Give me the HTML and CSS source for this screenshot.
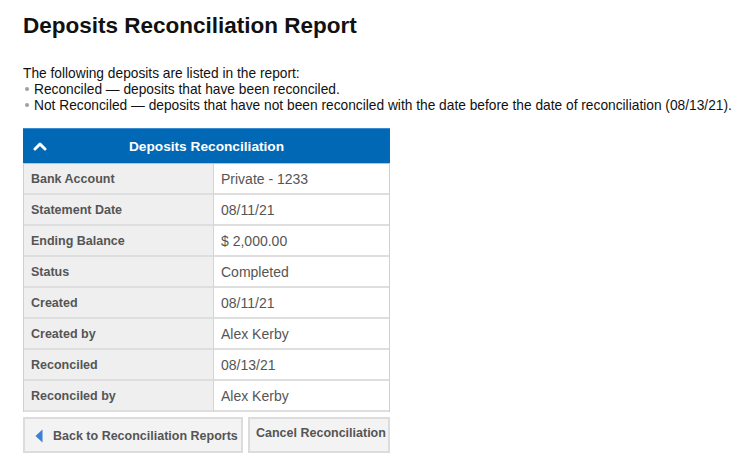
FILE: index.html
```html
<!DOCTYPE html>
<html>
<head>
<meta charset="utf-8">
<link rel="stylesheet" href="styles.css">
</head>
<body>
<div class="page">
  <h1 class="title">Deposits Reconciliation Report</h1>
  <div class="intro">
    <div>The following deposits are listed in the report:</div>
    <div><span class="dot"></span>Reconciled — deposits that have been reconciled.</div>
    <div><span class="dot"></span>Not Reconciled — deposits that have not been reconciled with the date before the date of reconciliation (08/13/21).</div>
  </div>
  <div class="panel">
    <div class="panel-head">
      <svg class="chev" width="14" height="10" viewBox="0 0 14 10"><path d="M2 8 L7 3 L12 8" fill="none" stroke="#fff" stroke-width="3" stroke-linecap="round" stroke-linejoin="round"/></svg>
      <span class="panel-title">Deposits Reconciliation</span>
    </div>
    <div class="grid">
      <div class="lbl">Bank Account</div><div class="val">Private - 1233</div>
      <div class="lbl">Statement Date</div><div class="val">08/11/21</div>
      <div class="lbl">Ending Balance</div><div class="val">$ 2,000.00</div>
      <div class="lbl">Status</div><div class="val">Completed</div>
      <div class="lbl">Created</div><div class="val">08/11/21</div>
      <div class="lbl">Created by</div><div class="val">Alex Kerby</div>
      <div class="lbl">Reconciled</div><div class="val">08/13/21</div>
      <div class="lbl">Reconciled by</div><div class="val">Alex Kerby</div>
    </div>
  </div>
  <div class="buttons">
    <button class="btn btn-back"><svg class="tri" width="8" height="14" viewBox="0 0 8 14"><path d="M7.5 0.5 L0.5 7 L7.5 13.5 Z" fill="#3d7fd4"/></svg>Back to Reconciliation Reports</button>
    <button class="btn btn-cancel">Cancel Reconciliation</button>
  </div>
</div>
</body>
</html>
```
FILE: styles.css
```css
html, body {
  margin: 0;
  padding: 0;
  background: #fff;
}
body {
  font-family: "Liberation Sans", Arial, sans-serif;
  color: #111;
}
.page {
  padding: 13px 0 0 23px;
}
.title {
  font-size: 22.5px;
  font-weight: bold;
  line-height: 26px;
  margin: 0;
  color: #111;
}
.intro {
  margin-top: 27px;
  font-size: 13.75px;
  line-height: 16px;
  color: #111;
}
.dot {
  display: inline-block;
  width: 4px;
  height: 4px;
  border-radius: 50%;
  background: #a0a0a0;
  margin: 0 5px 2px 2px;
  vertical-align: middle;
}
.panel {
  margin-top: 14px;
  width: 367px;
  border-left: 1px solid #d0d0d0;
  border-right: 1px solid #d0d0d0;
  box-sizing: border-box;
}
.panel-head {
  height: 35px;
  background: #0068b5;
  border-top: 1px solid #3a8bd0;
  box-sizing: border-box;
  display: flex;
  align-items: center;
  position: relative;
  margin: 0 -1px;
}
.chev {
  position: absolute;
  left: 10px;
  top: 12px;
}
.panel-title {
  flex: 1;
  text-align: center;
  color: #fff;
  font-weight: bold;
  font-size: 13.7px;
}
.grid {
  display: grid;
  grid-template-columns: 190px 1fr;
  border-top: 1px solid #a9c7e4;
}
.lbl, .val {
  height: 31px;
  box-sizing: border-box;
  border-bottom: 2px solid #dedede;
  display: flex;
  align-items: center;
}
.lbl {
  background: #efefef;
  border-right: 1px solid #d4d4d4;
  padding-left: 7px;
  font-weight: bold;
  font-size: 12.5px;
  color: #555;
}
.val {
  background: #fff;
  padding-left: 7px;
  font-size: 14px;
  color: #555;
}
.buttons {
  display: flex;
  gap: 5px;
  margin-top: 5px;
  width: 367px;
}
.btn {
  height: 36px;
  box-sizing: border-box;
  background: #f3f3f3;
  border: 2px solid #dcdcdc;
  font-family: "Liberation Sans", Arial, sans-serif;
  font-weight: bold;
  font-size: 12.5px;
  color: #555;
  display: flex;
  align-items: center;
  margin: 0;
}
.btn-back {
  width: 220px;
  padding: 2px 0 0 10px;
}
.tri {
  margin-right: 10px;
}
.btn-cancel {
  flex: 1;
  padding: 0 0 4px 6px;
}
```
